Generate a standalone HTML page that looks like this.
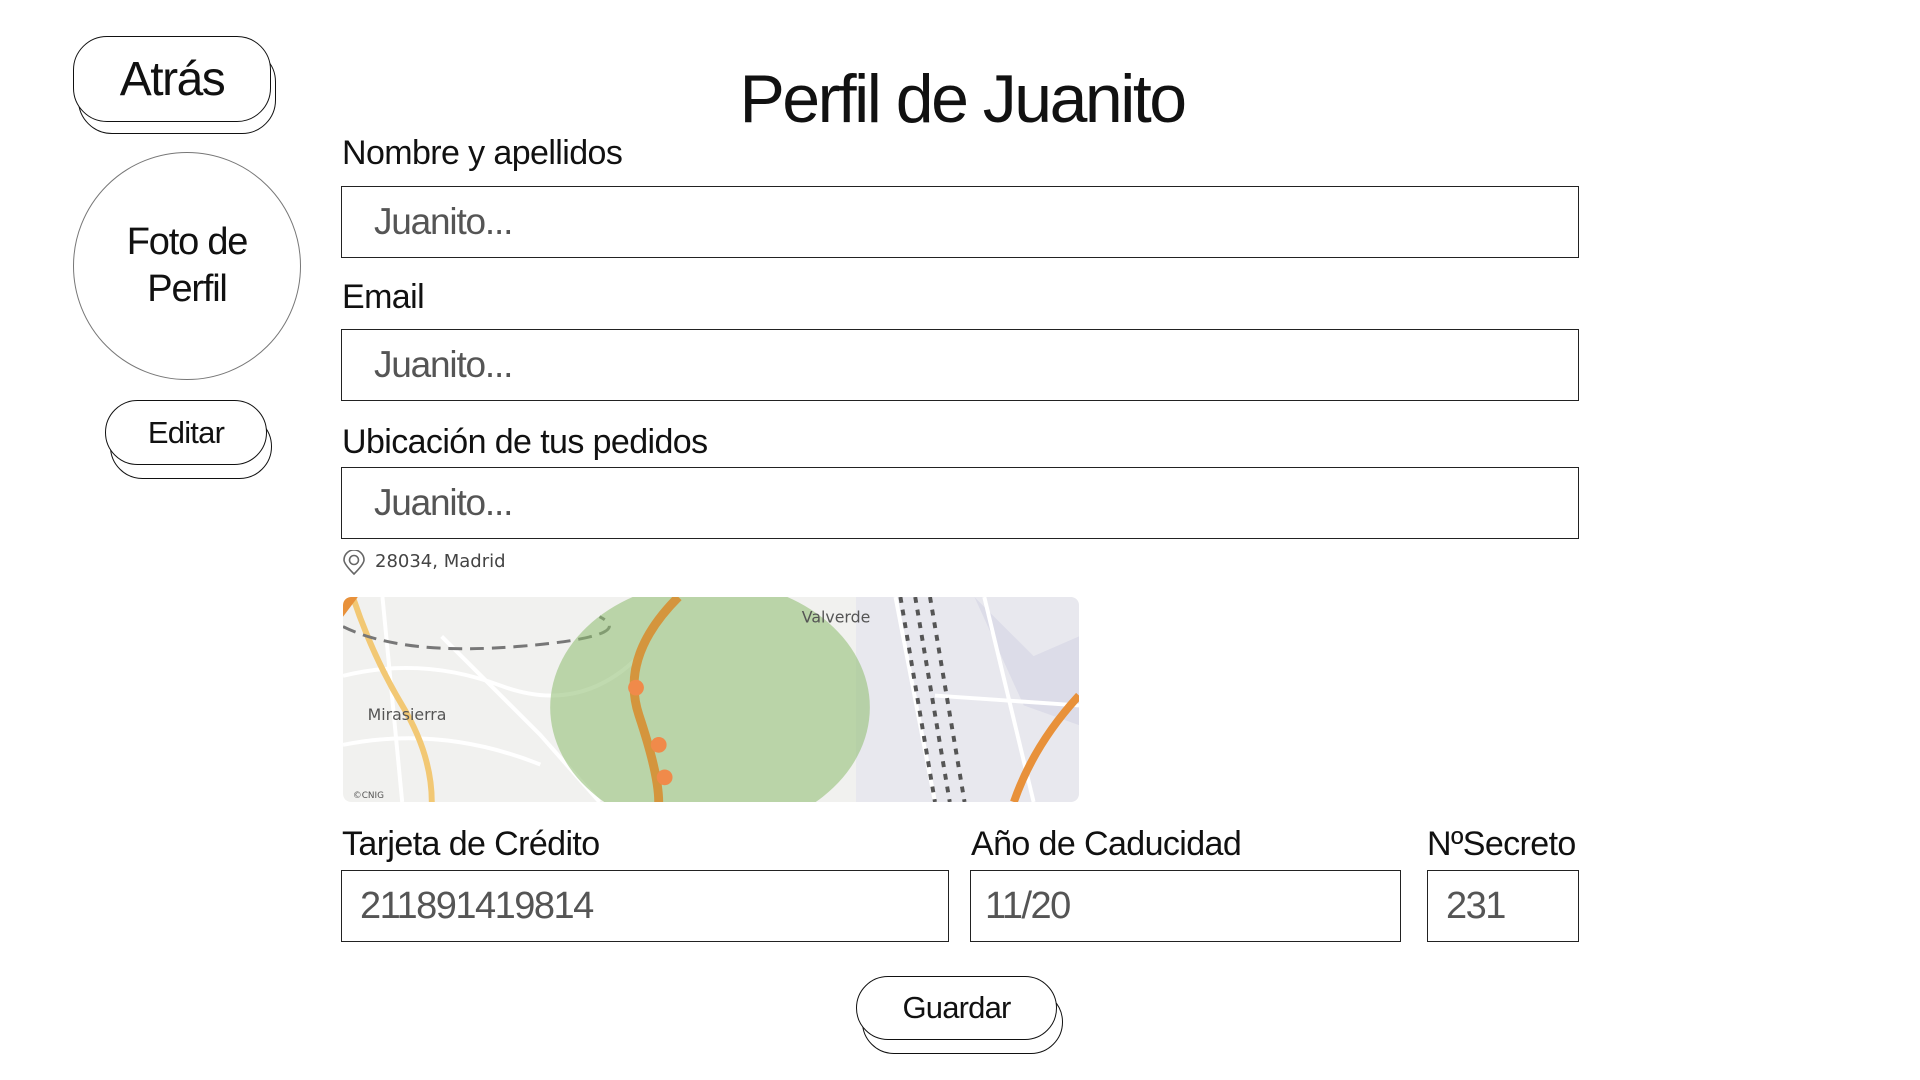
<!DOCTYPE html>
<html><head><meta charset="utf-8"><style>
*{box-sizing:border-box;margin:0;padding:0}
body{width:1920px;height:1080px;background:#fff;font-family:"Liberation Sans",sans-serif;color:#111;position:relative;overflow:hidden}
.a{position:absolute}
.btn{position:absolute;border:1.5px solid #111;border-radius:34px;background:#fff;display:flex;align-items:center;justify-content:center}
.sh{position:absolute;border:1.5px solid #111;border-radius:34px;background:#fff}
.lbl{position:absolute;font-size:34px;letter-spacing:-0.6px;line-height:1}
.inp{position:absolute;border:1.5px solid #222;background:#fff;display:flex;align-items:center;color:#555}
</style></head><body>
<div class="sh" style="left:78px;top:48px;width:198px;height:86px"></div>
<div class="btn" style="left:73px;top:36px;width:198px;height:86px;font-size:48px;letter-spacing:-1.5px">Atrás</div>
<div class="a" style="left:682px;top:65px;width:560px;text-align:center;font-size:68px;letter-spacing:-2.5px;line-height:1">Perfil de Juanito</div>
<div class="a" style="left:73px;top:152px;width:228px;height:228px;border:1.2px solid #777;border-radius:50%;display:flex;align-items:center;justify-content:center;text-align:center;font-size:38px;line-height:47px;letter-spacing:-1.2px">Foto de<br>Perfil</div>
<div class="sh" style="left:110px;top:414px;width:162px;height:65px"></div>
<div class="btn" style="left:105px;top:400px;width:162px;height:65px;font-size:31px;letter-spacing:-0.8px">Editar</div>

<div class="lbl" style="left:342px;top:136px">Nombre y apellidos</div>
<div class="inp" style="left:341px;top:186px;width:1238px;height:72px;padding-left:32px;font-size:37px;letter-spacing:-1.2px">Juanito...</div>
<div class="lbl" style="left:342px;top:280px">Email</div>
<div class="inp" style="left:341px;top:329px;width:1238px;height:72px;padding-left:32px;font-size:37px;letter-spacing:-1.2px">Juanito...</div>
<div class="lbl" style="left:342px;top:425px">Ubicación de tus pedidos</div>
<div class="inp" style="left:341px;top:467px;width:1238px;height:72px;padding-left:32px;font-size:37px;letter-spacing:-1.2px">Juanito...</div>

<svg class="a" style="left:342px;top:550px" width="24" height="26" viewBox="0 0 24 26"><path d="M12 24C5 17 2 13 2 10a10 10 0 0 1 20 0c0 3-3 7-10 14z" fill="none" stroke="#666" stroke-width="1.6"/><circle cx="12" cy="10" r="4.5" fill="none" stroke="#666" stroke-width="1.6"/></svg>
<div class="a" style="left:375px;top:551px;font-family:'DejaVu Sans',sans-serif;font-size:18px;color:#444">28034, Madrid</div>

<svg class="a" style="left:343px;top:597px;border-radius:8px" width="736" height="205" viewBox="0 0 746 208" preserveAspectRatio="none">
<defs><clipPath id="c"><rect width="746" height="208" rx="8"/></clipPath></defs>
<g clip-path="url(#c)">
<rect width="746" height="208" fill="#f1f1ef"/>
<rect x="520" y="0" width="226" height="208" fill="#e8e8ee"/>
<path d="M640 0 L700 60 L746 40 L746 130 L690 110 Z" fill="#dcdce8"/>
<g stroke="#fff" stroke-width="4" fill="none">
<path d="M0 80 Q80 60 160 90 T300 60"/><path d="M40 0 L60 208"/><path d="M100 40 L200 140 L260 208"/><path d="M0 150 Q100 130 200 170"/><path d="M560 0 L600 208"/><path d="M650 0 L700 208"/><path d="M600 100 L746 110"/>
</g>
<path d="M10 0 Q30 60 60 110 T90 208" stroke="#f2c874" stroke-width="6" fill="none"/>
<path d="M0 30 Q60 60 180 50 T260 20" stroke="#777" stroke-width="3" stroke-dasharray="14 8" fill="none"/>
<ellipse cx="372" cy="112" rx="162" ry="128" fill="#8cbb6e" opacity="0.55"/>
<path d="M340 0 Q280 60 300 120 T320 208" stroke="#d88a2a" stroke-width="9" fill="none" opacity="0.85"/>
<circle cx="297" cy="92" r="8" fill="#f08a4a"/><circle cx="320" cy="150" r="8" fill="#f08a4a"/><circle cx="326" cy="183" r="8" fill="#f08a4a"/>
<g stroke="#555" stroke-width="4" stroke-dasharray="6 7"><path d="M565 0 L600 208"/><path d="M580 0 L615 208"/><path d="M595 0 L630 208"/></g>
<path d="M746 100 Q700 150 680 208" stroke="#e8913a" stroke-width="8" fill="none"/>
<path d="M0 0 L15 0 L0 20Z" fill="#e8913a"/>
<text x="25" y="125" font-family="DejaVu Sans" font-size="16" fill="#555">Mirasierra</text>
<text x="465" y="26" font-family="DejaVu Sans" font-size="16" fill="#555">Valverde</text>
<text x="10" y="204" font-family="DejaVu Sans" font-size="9" fill="#555">©CNIG</text>
</g></svg>

<div class="lbl" style="left:342px;top:827px">Tarjeta de Crédito</div>
<div class="lbl" style="left:971px;top:827px">Año de Caducidad</div>
<div class="lbl" style="left:1427px;top:827px">NºSecreto</div>
<div class="inp" style="left:341px;top:870px;width:608px;height:72px;padding-left:18px;font-size:38px;letter-spacing:-1.5px">211891419814</div>
<div class="inp" style="left:970px;top:870px;width:431px;height:72px;padding-left:14px;font-size:38px;letter-spacing:-1.5px">11/20</div>
<div class="inp" style="left:1427px;top:870px;width:152px;height:72px;padding-left:18px;font-size:38px;letter-spacing:-1.5px">231</div>

<div class="sh" style="left:862px;top:990px;width:201px;height:64px"></div>
<div class="btn" style="left:856px;top:976px;width:201px;height:64px;font-size:31px;letter-spacing:-0.8px">Guardar</div>
</body></html>
